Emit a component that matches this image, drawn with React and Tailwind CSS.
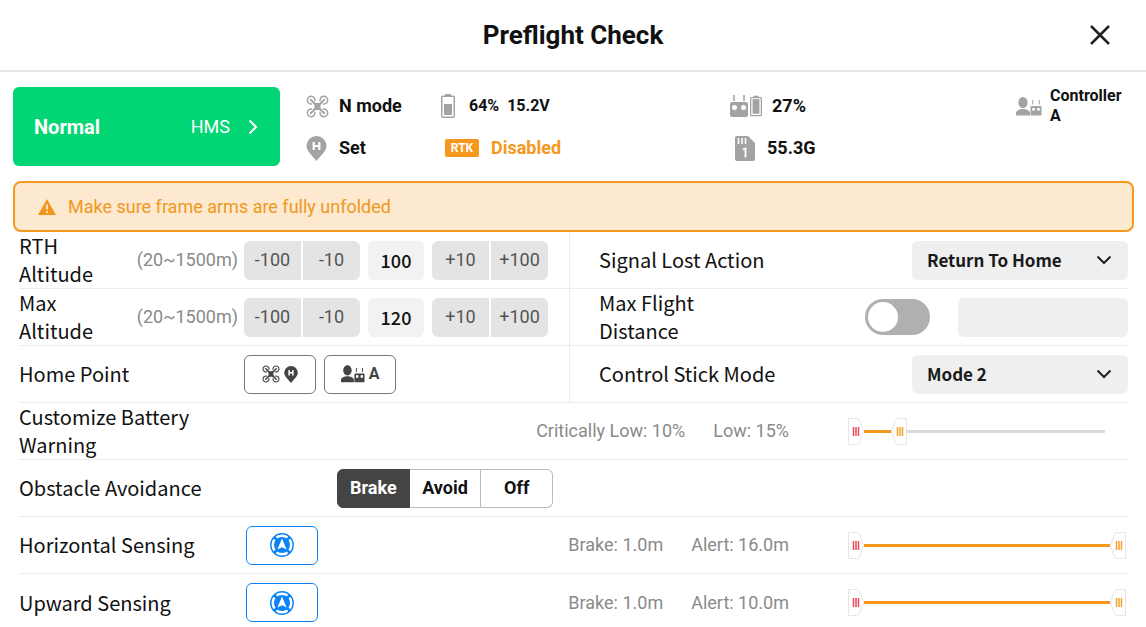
import { useState } from 'react';

const DroneIcon = ({ className }) => (
  <svg viewBox="0 0 24 24" className={className} fill="none" aria-hidden="true">
    <g stroke="currentColor" strokeWidth="1.5">
      <path d="M9.2 6.5A4 4 0 1 0 6.500 9.200" />
      <path d="M14.800 6.500a4 4 0 1 1 2.700 2.700" />
      <path d="M9.200 17.500a4 4 0 1 1-2.700-2.700" />
      <path d="M14.800 17.500a4 4 0 1 0 2.700-2.700" />
      <path d="M5 5l5 5M19 5l-5 5M5 19l5-5M19 19l-5-5" strokeWidth="2" strokeLinecap="round" />
    </g>
    <path d="M7 7l3.300 1.300h3.400L17 7l-1.800 3.300v3.400L17 17l-3.300-1.300h-3.400L7 17l1.800-3.300v-3.400z" fill="currentColor" />
  </svg>
);

const HomePinIcon = ({ className }) => (
  <svg viewBox="0 0 20 25" className={className} aria-hidden="true">
    <path d="M10 0a10 10 0 0 1 10 10c0 5-5 8.600-10 15C5 18.600 0 15 0 10A10 10 0 0 1 10 0z" fill="currentColor" />
    <path d="M7.200 6v8M12.800 6v8M7.200 10h5.600" stroke="#fff" strokeWidth="2.200" fill="none" />
  </svg>
);

const BatteryIcon = ({ level, className }) => (
  <svg viewBox="0 0 14 24" className={className} aria-hidden="true">
    <path d="M4 0h6v2H4z" fill="currentColor" />
    <rect x="0.750" y="2.250" width="12.500" height="21" rx="1" fill="none" stroke="currentColor" strokeWidth="1.500" />
    <rect x="3" y={21 - 17 * level} width="8" height={17 * level} fill="currentColor" />
  </svg>
);

const RemoteIcon = ({ className }) => (
  <svg viewBox="0 0 18 22" className={className} aria-hidden="true">
    <path d="M4 0v6M14 0v6" stroke="currentColor" strokeWidth="1.500" />
    <path
      fillRule="evenodd"
      fill="currentColor"
      d="M2 7h14a2 2 0 0 1 2 2v11a2 2 0 0 1-2 2H2a2 2 0 0 1-2-2V9a2 2 0 0 1 2-2zm2.500 3a2.500 2.500 0 1 0 0 5 2.500 2.500 0 0 0 0-5zm9 0a2.500 2.500 0 1 0 0 5 2.500 2.500 0 0 0 0-5z"
    />
  </svg>
);

const SdCardIcon = ({ className }) => (
  <svg viewBox="0 0 20 25" className={className} aria-hidden="true">
    <path d="M2 0h11l7 7v16a2 2 0 0 1-2 2H2a2 2 0 0 1-2-2V2a2 2 0 0 1 2-2z" fill="currentColor" />
    <path d="M3.500 2v6M7 2v6M10.500 2v6" stroke="#fff" strokeWidth="1.500" />
    <path d="M7.800 13.500l2.700-1v9" stroke="#fff" strokeWidth="1.800" fill="none" />
  </svg>
);

const PilotIcon = ({ className }) => (
  <svg viewBox="0 0 26 19" className={className} aria-hidden="true">
    <g fill="currentColor">
      <ellipse cx="7" cy="5.500" rx="4.600" ry="5.500" />
      <path d="M0 18.500v-2.500c0-2.500 4-4 7-4s7 1.500 7 4v2.500z" />
      <path
        fillRule="evenodd"
        d="M15.500 9h9a1 1 0 0 1 1 1v7.500a1 1 0 0 1-1 1h-9a1 1 0 0 1-1-1V10a1 1 0 0 1 1-1zm2 1.700a1.500 1.500 0 1 0 0 3 1.500 1.500 0 0 0 0-3zm5 0a1.500 1.500 0 1 0 0 3 1.500 1.500 0 0 0 0-3z"
      />
    </g>
    <path d="M16.700 3v4.500M23.300 3v4.500" stroke="currentColor" />
  </svg>
);

const RadarIcon = ({ className }) => (
  <svg viewBox="0 0 24 24" className={className} aria-hidden="true">
    <circle cx="12" cy="12" r="11.200" fill="none" stroke="currentColor" strokeWidth="1.400" />
    <circle cx="12" cy="12" r="8" fill="currentColor" />
    <path d="M4 4l4 4M20 4l-4 4M4 20l4-4M20 20l-4-4" stroke="currentColor" strokeWidth="2.600" />
    <path d="M12 5.500l4.600 11-4.600-2.300-4.600 2.300z" fill="#fff" />
  </svg>
);

const Chevron = ({ className }) => (
  <svg viewBox="0 0 16 10" className={className} fill="none" aria-hidden="true">
    <path d="M1.500 1.500L8 8l6.500-6.500" stroke="currentColor" strokeWidth="2" />
  </svg>
);

const Status = ({ icon, children }) => (
  <div className="flex h-[42px] items-center text-lg font-bold">
    {icon}
    <span className="text-[#111]">{children}</span>
  </div>
);

const Row = ({ children, last }) => (
  <div className={`flex h-[57px] items-center ${last ? '' : 'border-b border-[#ececec]'}`}>{children}</div>
);

const Label = ({ children, className = '', ...props }) => (
  <label
    className={`shrink-0 font-['Noto_Sans_CJK_SC',sans-serif] text-xl leading-7 text-[#111] ${className}`}
    {...props}
  >
    {children}
  </label>
);

const StepButton = ({ children, ...props }) => (
  <button
    className="h-[39px] w-[57px] bg-[#e4e4e4] text-lg text-[#555] first:rounded-l-md last:rounded-r-md"
    {...props}
  >
    {children}
  </button>
);

const AltitudeRow = ({ id, label, initial }) => {
  const [value, setValue] = useState(initial);
  const step = (d) => setValue((v) => Math.min(1500, Math.max(20, Number(v) + d)));

  return (
    <Row>
      <Label htmlFor={id} className="w-[110px]">{label}</Label>
      <span className="w-[109px] text-right text-lg whitespace-nowrap text-[#8a8a8a]">(20~1500m)</span>
      <div className="ml-1.5 flex gap-2">
        <div className="flex gap-0.5">
          <StepButton onClick={() => step(-100)}>-100</StepButton>
          <StepButton onClick={() => step(-10)}>-10</StepButton>
        </div>
        <input
          id={id}
          value={value}
          onChange={(e) => setValue(e.target.value)}
          className="h-[39px] w-[56px] rounded-md bg-[#f2f2f2] text-center font-['Noto_Sans_CJK_SC',sans-serif] text-lg font-medium text-[#111]"
        />
        <div className="flex gap-0.5">
          <StepButton onClick={() => step(10)}>+10</StepButton>
          <StepButton onClick={() => step(100)}>+100</StepButton>
        </div>
      </div>
    </Row>
  );
};

const Dropdown = ({ id, options }) => (
  <div className="relative ml-auto w-[216px]">
    <select
      id={id}
      className="h-[39px] w-full appearance-none rounded-md bg-[#efefef] pl-[15px] font-['Noto_Sans_CJK_SC',sans-serif] text-[17px] font-bold text-[#1a1a1a]"
    >
      {options.map((o) => (
        <option key={o}>{o}</option>
      ))}
    </select>
    <Chevron className="pointer-events-none absolute top-3.5 right-4 h-2.5 w-4 text-[#222]" />
  </div>
);

const Handle = ({ color, flip }) => (
  <svg viewBox="0 0 16 27" className="h-[27px] w-4" aria-hidden="true">
    <path
      d={flip ? 'M15.500 .5H7.500Q5 .5 4.200 3L.5 13.500 4.200 24q.8 2.500 3.300 2.500h8z' : 'M.5 .5h8q2.500 0 3.300 2.500l3.700 10.500L11.800 24q-.8 2.500-3.300 2.500h-8z'}
      fill="#fff"
      stroke="#e6e6e6"
    />
    <path d={flip ? 'M6.500 9v9M9 9v9M11.500 9v9' : 'M5.500 9v9M8 9v9M10.500 9v9'} stroke={color} strokeWidth="1.500" />
  </svg>
);

const RangeSlider = ({ name, min, max, low, high, track }) => {
  const [values, setValues] = useState([low, high]);
  const pos = (v) => `${((v - min) / (max - min)) * 100}%`;
  const inputClass =
    'pointer-events-none absolute inset-0 h-full w-full opacity-0 [&::-webkit-slider-thumb]:pointer-events-auto';

  return (
    <div className="relative flex h-[27px] w-[278px] items-center px-4">
      <div className="relative h-[3px] flex-1">
        <div className={`h-[3px] bg-[#dadada] ${track}`} />
        <div
          className="absolute top-0 h-[3px] bg-[#f5981d]"
          style={{ left: pos(values[0]), width: `calc(${pos(values[1])} - ${pos(values[0])})` }}
        />
        <div className="absolute -top-3 -translate-x-full" style={{ left: pos(values[0]) }}>
          <Handle color="#ea4b5b" />
        </div>
        <div className="absolute -top-3" style={{ left: pos(values[1]) }}>
          <Handle color="#f0a32c" flip />
        </div>
      </div>
      <input
        type="range"
        aria-label={`${name} lower`}
        min={min}
        max={max}
        value={values[0]}
        onChange={(e) => setValues([Math.min(Number(e.target.value), values[1]), values[1]])}
        className={inputClass}
      />
      <input
        type="range"
        aria-label={`${name} upper`}
        min={min}
        max={max}
        value={values[1]}
        onChange={(e) => setValues([values[0], Math.max(Number(e.target.value), values[0])])}
        className={inputClass}
      />
    </div>
  );
};

const RangeRow = ({ label, labelClass, lowText, highText, toggle, last, ...slider }) => (
  <Row last={last}>
    <Label className={labelClass}>{label}</Label>
    {toggle && (
      <button
        aria-label={`Toggle ${label}`}
        className="flex h-[39px] w-[72px] items-center justify-center rounded-md border border-[#0d84f5] text-[#0d84f5]"
      >
        <RadarIcon className="size-6" />
      </button>
    )}
    <div className="ml-auto flex gap-7 text-lg text-[#8a8a8a]">
      <span>{lowText}</span>
      <span>{highText}</span>
    </div>
    <div className="mr-0.5 ml-[59px]">
      <RangeSlider name={label} {...slider} />
    </div>
  </Row>
);

const AVOIDANCE = ['Brake', 'Avoid', 'Off'];

export default function App() {
  const [avoidance, setAvoidance] = useState('Brake');

  return (
    <main className="h-screen overflow-hidden bg-white font-[Roboto,sans-serif]">
      <header className="grid h-[72px] grid-cols-[1fr_auto_1fr] items-center border-b-2 border-[#e4e4e4] px-9">
        <h1 className="col-start-2 text-[26px] font-bold text-[#111]">Preflight Check</h1>
        <button aria-label="Close" className="justify-self-end text-[#222]">
          <svg viewBox="0 0 20 20" className="size-5" fill="none" aria-hidden="true">
            <path d="M1 1l18 18M19 1L1 19" stroke="currentColor" strokeWidth="2.500" />
          </svg>
        </button>
      </header>

      <section className="flex items-start pt-[13px] pr-3 pl-[13px]">
        <button className="mt-0.5 flex h-[79px] w-[267px] shrink-0 items-center rounded-md bg-[#02d573] pr-[22px] pl-[21px] text-white">
          <span className="text-xl font-bold">Normal</span>
          <span className="ml-auto text-lg">HMS</span>
          <svg viewBox="0 0 10 16" className="ml-[18px] h-4 w-2.5" fill="none" aria-hidden="true">
            <path d="M1.500 1.500L8 8l-6.500 6.500" stroke="currentColor" strokeWidth="2" />
          </svg>
        </button>
        <div className="ml-[26px] grid flex-1 grid-cols-[134fr_290fr_286fr_118fr] text-[#a3a3a3]">
          <div>
            <Status icon={<DroneIcon className="mr-2.5 size-[23px]" />}>N mode</Status>
            <Status icon={<HomePinIcon className="mr-3 h-[25px] w-[21px]" />}>Set</Status>
          </div>
          <div>
            <div className="flex h-[42px] items-center gap-2 text-base font-bold">
              <BatteryIcon level={0.65} className="mr-1.5 ml-px h-6 w-3.5" />
              <span className="text-[#111]">64%</span>
              <span className="text-[#111]">15.2V</span>
            </div>
            <div className="flex h-[42px] items-center text-lg font-bold text-[#f5981d]">
              <span className="mr-3 ml-[5px] flex h-[18px] w-[34px] items-center justify-center rounded-xs bg-[#f5981d] text-xs text-white">
                RTK
              </span>
              Disabled
            </div>
          </div>
          <div>
            <Status
              icon={
                <span className="mr-2.5 flex gap-0.5">
                  <RemoteIcon className="h-[22px] w-[18px]" />
                  <BatteryIcon level={1} className="h-[22px] w-3" />
                </span>
              }
            >
              27%
            </Status>
            <Status icon={<SdCardIcon className="mr-3 ml-[5px] h-[25px] w-5" />}>55.3G</Status>
          </div>
          <div className="flex h-[42px] items-center">
            <PilotIcon className="mr-2 h-[19px] w-[26px] shrink-0" />
            <p className="w-20 text-base leading-5 font-bold text-[#111]">Controller A</p>
          </div>
        </div>
      </section>

      <div
        role="alert"
        className="mt-3 mr-3 ml-[13px] flex h-[51px] items-center rounded-lg border-2 border-[#f5981d] bg-[#fce9cf] pl-[23px] text-lg text-[#f0981d]"
      >
        <svg viewBox="0 0 18 16" className="mr-3 h-4 w-[18px]" aria-hidden="true">
          <path d="M9 0l9 16H0z" fill="currentColor" />
          <path d="M9 5.500v5M9 12v2" stroke="#fce9cf" strokeWidth="1.800" />
        </svg>
        Make sure frame arms are fully unfolded
      </div>

      <section className="pr-[18px] pl-[19px]">
        <div className="flex">
          <div className="w-[551px] shrink-0 border-r border-[#ececec]">
            <AltitudeRow id="rth-altitude" label="RTH Altitude" initial={100} />
            <AltitudeRow id="max-altitude" label="Max Altitude" initial={120} />
            <Row>
              <Label className="w-[225px]">Home Point</Label>
              <div className="flex gap-2 text-[#444]">
                <button aria-label="Aircraft location" className="flex h-[39px] w-[72px] items-center justify-center gap-1 rounded-md border border-[#777]">
                  <DroneIcon className="h-[18px] w-[18px]" />
                  <HomePinIcon className="h-[17px] w-3.5" />
                </button>
                <button aria-label="Controller location" className="flex h-[39px] w-[72px] items-center justify-center gap-1 rounded-md border border-[#777] text-base font-bold">
                  <PilotIcon className="h-[18px] w-6" />
                  A
                </button>
              </div>
            </Row>
          </div>
          <div className="flex-1">
            <Row>
              <Label htmlFor="signal-lost" className="ml-[29px]">Signal Lost Action</Label>
              <Dropdown id="signal-lost" options={['Return To Home', 'Hover', 'Land']} />
            </Row>
            <Row>
              <Label htmlFor="max-distance" className="ml-[29px] w-[120px]">Max Flight Distance</Label>
              <input
                type="checkbox"
                role="switch"
                aria-label="Limit flight distance"
                className="ml-auto h-9 w-[65px] appearance-none rounded-full bg-[#b0b0b0] p-[3px] before:block before:size-[30px] before:rounded-full before:bg-white checked:bg-[#2b8ff5] checked:before:ml-auto"
              />
              <input id="max-distance" disabled className="ml-7 h-[39px] w-[170px] rounded-md bg-[#efefef] px-3" />
            </Row>
            <Row>
              <Label htmlFor="stick-mode" className="ml-[29px]">Control Stick Mode</Label>
              <Dropdown id="stick-mode" options={['Mode 2', 'Mode 1', 'Mode 3']} />
            </Row>
          </div>
        </div>

        <RangeRow
          label="Customize Battery Warning"
          labelClass="w-[200px]"
          lowText="Critically Low: 10%"
          highText="Low: 15%"
          min={10}
          max={55}
          low={10}
          high={15}
          track="mr-[5px]"
        />
        <Row>
          <Label className="w-[318px]">Obstacle Avoidance</Label>
          <div className="flex h-[39px] w-[216px]">
            {AVOIDANCE.map((mode) => (
              <button
                key={mode}
                onClick={() => setAvoidance(mode)}
                className={`flex-1 border text-lg font-bold not-first:border-l-0 first:rounded-l-md last:rounded-r-md ${
                  avoidance === mode ? 'border-[#444] bg-[#444] text-white' : 'border-[#bbb] bg-white text-[#111]'
                }`}
              >
                {mode}
              </button>
            ))}
          </div>
        </Row>
        <RangeRow
          label="Horizontal Sensing"
          labelClass="w-[227px]"
          toggle
          lowText="Brake: 1.0m"
          highText="Alert: 16.0m"
          min={1}
          max={16}
          low={1}
          high={16}
          track=""
        />
        <RangeRow
          last
          label="Upward Sensing"
          labelClass="w-[227px]"
          toggle
          lowText="Brake: 1.0m"
          highText="Alert: 10.0m"
          min={1}
          max={10}
          low={1}
          high={10}
          track=""
        />
      </section>
    </main>
  );
}
